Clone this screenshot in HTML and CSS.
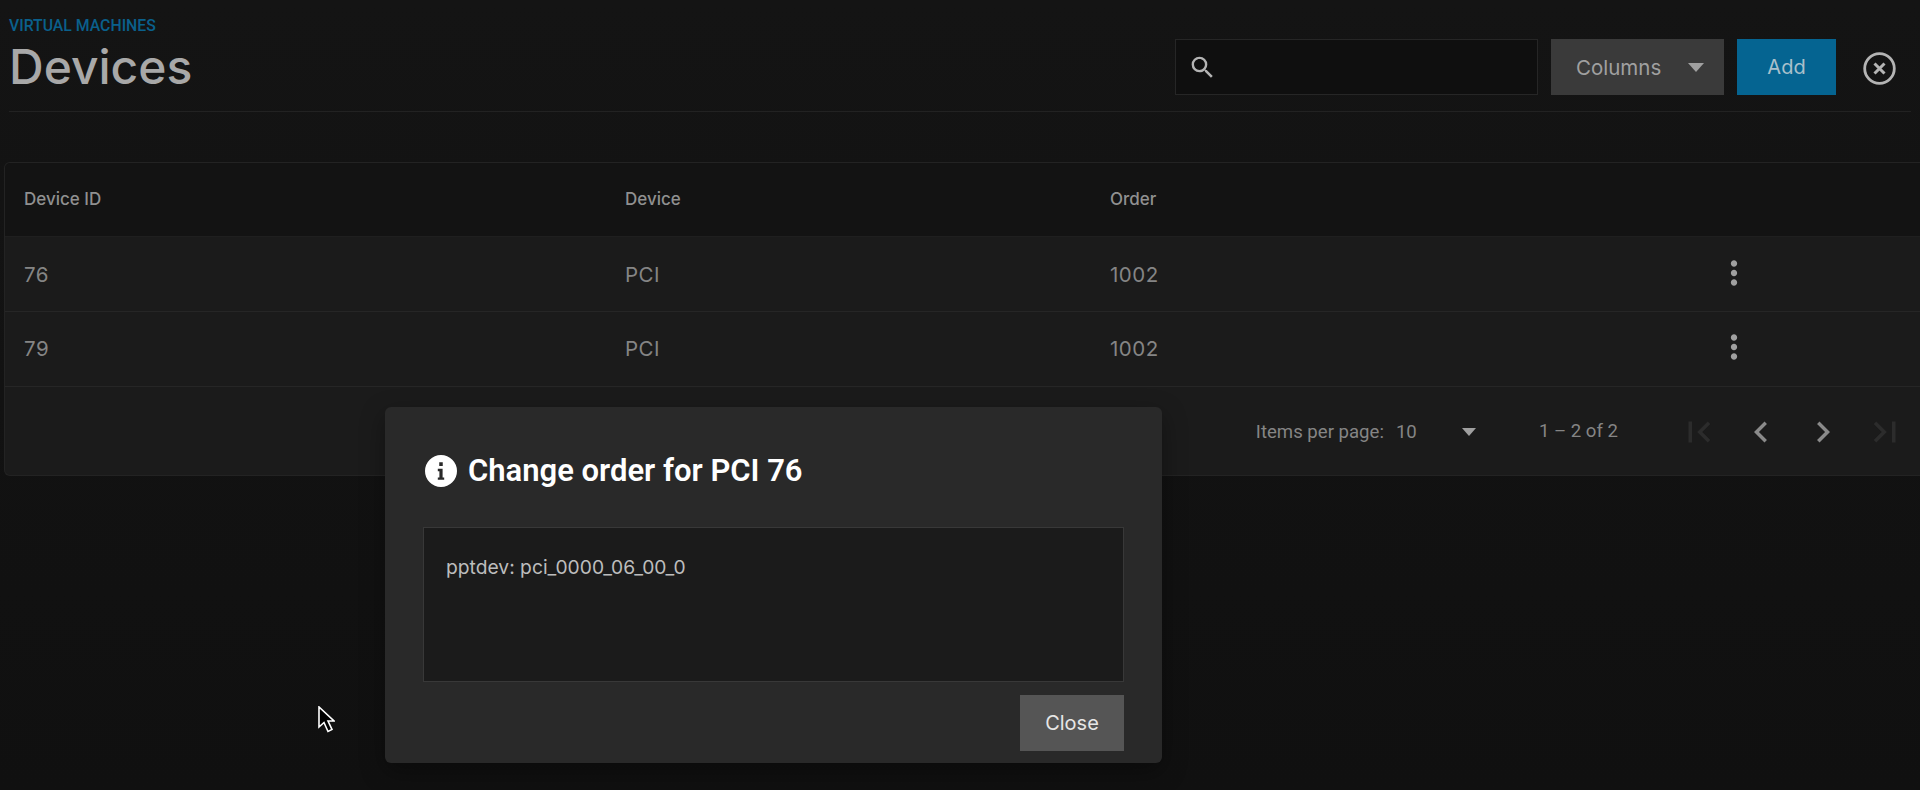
FILE: index.html
```html
<!DOCTYPE html>
<html lang="en">
<head>
<meta charset="utf-8">
<title>Devices</title>
<link rel="stylesheet" href="styles.css">
</head>
<body>
<div class="page">
  <header class="page-header">
    <div class="titles">
      <div class="crumb">VIRTUAL MACHINES</div>
      <h1 class="title">Devices</h1>
    </div>
    <div class="actions">
      <div class="search">
        <svg class="search-icon" viewBox="0 0 24 24"><path d="M15.5 14h-.79l-.28-.27A6.471 6.471 0 0 0 16 9.5 6.5 6.5 0 1 0 9.5 16c1.61 0 3.09-.59 4.23-1.57l.27.28v.79l5 4.99L20.49 19l-4.99-5zm-6 0C7.01 14 5 11.99 5 9.5S7.01 5 9.5 5 14 7.01 14 9.5 11.99 14 9.5 14z"/></svg>
      </div>
      <button class="btn btn-columns"><span>Columns</span><i class="caret"></i></button>
      <button class="btn btn-add">Add</button>
      <svg class="close-circle" viewBox="0 0 33 33"><circle cx="16.5" cy="16.5" r="14.8" fill="none" stroke-width="2.8"/><path d="M11.5 11.5l10 10M21.5 11.5l-10 10" fill="none" stroke-width="3"/></svg>
    </div>
  </header>

  <section class="table">
    <div class="row row-head"><div>Device ID</div><div>Device</div><div>Order</div><div></div></div>
    <div class="row row-body"><div>76</div><div>PCI</div><div>1002</div>
      <svg class="kebab" viewBox="0 0 24 24"><path d="M12 8c1.1 0 2-.9 2-2s-.9-2-2-2-2 .9-2 2 .9 2 2 2zm0 2c-1.1 0-2 .9-2 2s.9 2 2 2 2-.9 2-2-.9-2-2-2zm0 6c-1.1 0-2 .9-2 2s.9 2 2 2 2-.9 2-2-.9-2-2-2z"/></svg></div>
    <div class="row row-body"><div>79</div><div>PCI</div><div>1002</div>
      <svg class="kebab" viewBox="0 0 24 24"><path d="M12 8c1.1 0 2-.9 2-2s-.9-2-2-2-2 .9-2 2 .9 2 2 2zm0 2c-1.1 0-2 .9-2 2s.9 2 2 2 2-.9 2-2-.9-2-2-2zm0 6c-1.1 0-2 .9-2 2s.9 2 2 2 2-.9 2-2-.9-2-2-2z"/></svg></div>
    <div class="paginator">
      <span class="pg-label">Items per page:</span>
      <div class="pg-select"><span>10</span><i class="caret caret-small"></i></div>
      <span class="pg-range">1 – 2 of 2</span>
      <div class="pg-nav">
        <svg class="pg-icon off" viewBox="0 0 24 24"><path d="M18.41 16.59L13.82 12l4.59-4.59L17 6l-6 6 6 6zM6 6h2v12H6z"/></svg>
        <svg class="pg-icon" viewBox="0 0 24 24"><path d="M15.41 7.41L14 6l-6 6 6 6 1.41-1.41L10.83 12z"/></svg>
        <svg class="pg-icon" viewBox="0 0 24 24"><path d="M10 6L8.59 7.41 13.17 12l-4.58 4.59L10 18l6-6z"/></svg>
        <svg class="pg-icon off" viewBox="0 0 24 24"><path d="M5.59 7.41L10.18 12l-4.59 4.59L7 18l6-6-6-6zM16 6h2v12h-2z"/></svg>
      </div>
    </div>
  </section>
</div>

<div class="dialog">
  <h2 class="dialog-title">
    <svg class="info" viewBox="2 2 20 20"><path fill-rule="evenodd" d="M12 2a10 10 0 1 0 0 20 10 10 0 0 0 0-20zM10.9 6.6h2.2v2.3h-2.2zM10 10.6h3v5.4h1v1.5h-4V16h1v-3.9h-1z"/></svg>
    <span>Change order for PCI 76</span>
  </h2>
  <div class="dialog-box">pptdev: pci_0000_06_00_0</div>
  <div class="dialog-actions"><button class="btn btn-close">Close</button></div>
</div>

<svg class="cursor" viewBox="0 0 17 27"><path d="M1 1v20l5-4.5 4 9 4-2-4-8.5h6z" fill="#000" stroke="#fff" stroke-width="1.6" stroke-linejoin="miter"/></svg>
</body>
</html>
```
FILE: styles.css
```css
* { box-sizing: border-box; }
html, body { margin: 0; height: 100%; }
body {
  width: 1920px;
  height: 790px;
  overflow: hidden;
  position: relative;
  background: linear-gradient(#141414, #101010);
  font-family: "Inter", "Roboto", sans-serif;
  color: #8f8f8f;
}
.page { height: 100%; }

.page-header {
  height: 112px;
  margin: 0 9px;
  border-bottom: 1px solid #222222;
  display: flex;
  justify-content: space-between;
  align-items: flex-start;
}
.titles { padding-top: 17px; }
.crumb { font-family: "Roboto", sans-serif; font-size: 15.8px; font-weight: 500; line-height: 18px; color: #0a608c; }
.title { margin: 6px 0 0; font-size: 48px; line-height: 52px; font-weight: 500; color: #a8a8a8; }

.actions { display: flex; align-items: center; margin-top: 39px; margin-right: 15px; }
.search {
  width: 363px;
  height: 56px;
  background: #0f0f0f;
  border: 1px solid #262626;
  display: flex;
  align-items: center;
  padding-left: 12px;
}
.search-icon { width: 29px; height: 29px; fill: #b4b4b4; }
.btn {
  border: 0;
  height: 56px;
  font-family: "Inter", "Roboto", sans-serif;
  font-size: 20px;
  padding: 0;
}
.btn-columns {
  width: 173px;
  margin-left: 13px;
  background: #3a3a3a;
  color: #a0a0a0;
  font-size: 20.5px;
  display: flex;
  align-items: center;
  padding-left: 25px;
}
.btn-add { width: 99px; margin-left: 13px; background: #056491; color: #a9c0cc; }
.caret {
  display: block;
  width: 0;
  height: 0;
  border-left: 8px solid transparent;
  border-right: 8px solid transparent;
  border-top: 9px solid #a0a0a0;
  margin-left: 27px;
}
.close-circle { width: 33px; height: 33px; margin-left: 27px; margin-top: 2px; stroke: #b4b4b4; }

.table {
  margin: 50px 0 0 4px;
  height: 314px;
  border: 1px solid #232323;
  border-right: 0;
  border-radius: 6px 0 0 6px;
  background: #1b1b1b;
  overflow: hidden;
}
.row {
  display: grid;
  grid-template-columns: 601px 485px 605px 38px;
  align-items: center;
  padding-left: 19px;
}
.row-head {
  height: 73px;
  padding-bottom: 2px;
  background: #131313;
  font-size: 17px;
  font-weight: 500;
  color: #909090;
}
.row-body {
  height: 75px;
  border-top: 1px solid #262626;
  font-size: 20.5px;
  letter-spacing: .5px;
  color: #858585;
}
.row-body + .row-body { padding-bottom: 2px; }
.row-head + .row-body { border-top-color: #1f1f1f; }
.kebab { width: 38px; height: 38px; fill: #a0a0a0; margin-top: -3px; }

.paginator {
  height: 89px;
  padding-top: 1px;
  border-top: 1px solid #262626;
  display: flex;
  justify-content: flex-end;
  align-items: center;
  padding-right: 14px;
  font-family: "Roboto", sans-serif;
  font-size: 18.6px;
  color: #858585;
}
.pg-select { display: flex; justify-content: space-between; align-items: center; width: 80px; margin-left: 12px; }
.caret-small { border-left-width: 7.5px; border-right-width: 7.5px; border-top-width: 8px; margin: 0; }
.pg-range { margin-left: 63px; margin-right: 1px; margin-top: -2px; }
.pg-nav { display: flex; gap: 20px; margin-left: 59px; }
.pg-icon { width: 42px; height: 42px; fill: #8a8a8a; display: block; }
.pg-icon.off { fill: #2c2c2c; }

.dialog {
  position: absolute;
  left: 385px;
  top: 407px;
  width: 777px;
  height: 356px;
  background: #292929;
  border-radius: 6px;
  padding: 48px 38px 0;
  box-shadow: 0 8px 24px rgba(0,0,0,.35);
}
.dialog-title {
  display: flex;
  align-items: center;
  margin: 0;
  padding-left: 2px;
  height: 32px;
  font-family: "Roboto", sans-serif;
  font-size: 31px;
  font-weight: 600;
  color: #ffffff;
}
.dialog-title span { margin-top: -2px; }
.info { width: 32px; height: 32px; fill: #ffffff; margin-right: 11px; }
.dialog-box {
  margin-top: 40px;
  height: 155px;
  width: 701px;
  background: #1b1b1b;
  border: 1px solid #383838;
  padding: 27px 22px;
  font-size: 19.25px;
  line-height: 24px;
  color: #bdbdbd;
}
.dialog-actions { display: flex; justify-content: flex-end; width: 701px; margin-top: 13px; }
.btn-close { width: 104px; background: #555555; color: #e6e6e6; }

.cursor { position: absolute; left: 318px; top: 706px; width: 17px; height: 27px; }
```
